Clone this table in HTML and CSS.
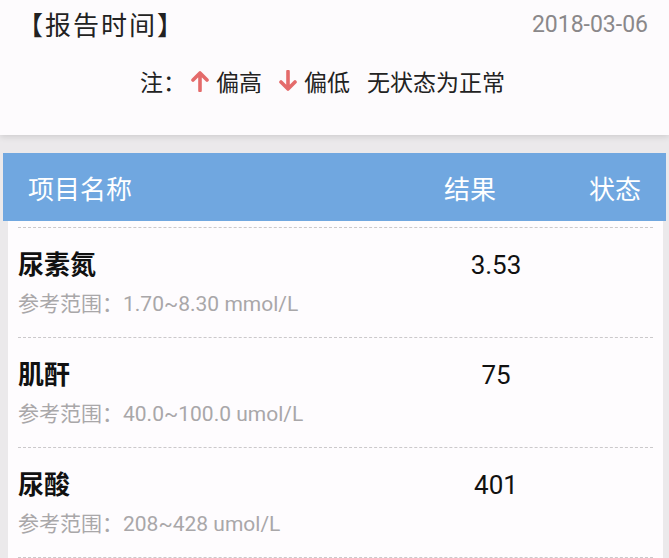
FILE: index.html
```html
<!DOCTYPE html>
<html lang="zh-CN">
<head>
<meta charset="utf-8">
<title>检验报告</title>
<link rel="stylesheet" href="styles.css">
</head>
<body>
<div class="page">
  <section class="summary">
    <div class="report-time">
      <span class="label">【报告时间】</span>
      <span class="date">2018-03-06</span>
    </div>
    <div class="legend">
      <span>注：</span>
      <svg class="arrow" viewBox="0 0 20 22" aria-hidden="true"><path d="M10 20.5V3 M3 10L10 3L17 10"/></svg>
      <span>偏高</span>
      <svg class="arrow down" viewBox="0 0 20 22" aria-hidden="true"><path d="M10 1.5V19 M3 12L10 19L17 12"/></svg>
      <span>偏低</span>
      <span class="normal">无状态为正常</span>
    </div>
  </section>

  <section class="table">
    <div class="thead">
      <span class="col-name">项目名称</span>
      <span class="col-result">结果</span>
      <span class="col-status">状态</span>
    </div>
    <div class="tbody">
      <div class="row">
        <div class="item">
          <div class="name">尿素氮</div>
          <div class="range">参考范围：1.70~8.30 mmol/L</div>
        </div>
        <div class="value">3.53</div>
        <div class="status"></div>
      </div>
      <div class="row">
        <div class="item">
          <div class="name">肌酐</div>
          <div class="range">参考范围：40.0~100.0 umol/L</div>
        </div>
        <div class="value">75</div>
        <div class="status"></div>
      </div>
      <div class="row">
        <div class="item">
          <div class="name">尿酸</div>
          <div class="range">参考范围：208~428 umol/L</div>
        </div>
        <div class="value">401</div>
        <div class="status"></div>
      </div>
    </div>
  </section>
</div>
</body>
</html>
```

FILE: styles.css
```css
* {
  box-sizing: border-box;
}

html, body {
  margin: 0;
  padding: 0;
}

body {
  background: #ebe9eb;
  font-family: Roboto, "Noto Sans CJK SC", sans-serif;
  color: #222;
  overflow: hidden;
}

.page {
  width: 669px;
  height: 558px;
  overflow: hidden;
}

.summary {
  background: #fdfbfd;
  height: 135px;
  padding: 7px 21px 0 17px;
  box-shadow: 0 2px 6px rgba(0, 0, 0, 0.12);
  position: relative;
}

.report-time {
  display: flex;
  justify-content: space-between;
  align-items: center;
  height: 32px;
}

.label {
  font-size: 26px;
  letter-spacing: 2px;
  color: #222;
}

.date {
  font-size: 23px;
  color: #8a888a;
  margin-top: 2px;
}

.legend {
  display: flex;
  justify-content: center;
  align-items: center;
  height: 30px;
  margin-top: 27px;
  font-size: 23px;
  color: #222;
  padding-right: 20px;
}

.legend .arrow {
  width: 20px;
  height: 22px;
  margin: 0 6px 0 4px;
  fill: none;
  stroke: #e46b6b;
  stroke-width: 3.6;
  stroke-linecap: round;
  stroke-linejoin: round;
}

.legend .arrow.down {
  margin-left: 16px;
}

.legend .normal {
  margin-left: 17px;
}

.table {
  margin-top: 18px;
  padding: 0 3px 0 3px;
}

.thead {
  display: flex;
  align-items: center;
  height: 68px;
  background: #70a7e0;
  color: #fff;
  font-size: 26px;
  padding: 0 25px 0 25px;
}

.col-name {
  flex: 1;
}

.col-result {
  margin-right: 93px;
}

.tbody {
  background: #fefcfe;
  margin: 0 3px 0 5px;
  padding: 6px 10px 0 10px;
  height: 400px;
}

.row {
  display: grid;
  grid-template-columns: 1fr 100px 107px;
  border-top: 1px dashed #cbc9cb;
  padding: 20px 0 21px 0;
  height: 110px;
}

.row:last-child {
  border-bottom: 1px dashed #cbc9cb;
  height: 111px;
}

.name {
  font-size: 26px;
  font-weight: 700;
  line-height: 34px;
  color: #111;
}

.range {
  margin-top: 9px;
  font-size: 21px;
  line-height: 26px;
  color: #a9a7a9;
}

.value {
  font-size: 26px;
  line-height: 34px;
  text-align: center;
  color: #111;
}
```
